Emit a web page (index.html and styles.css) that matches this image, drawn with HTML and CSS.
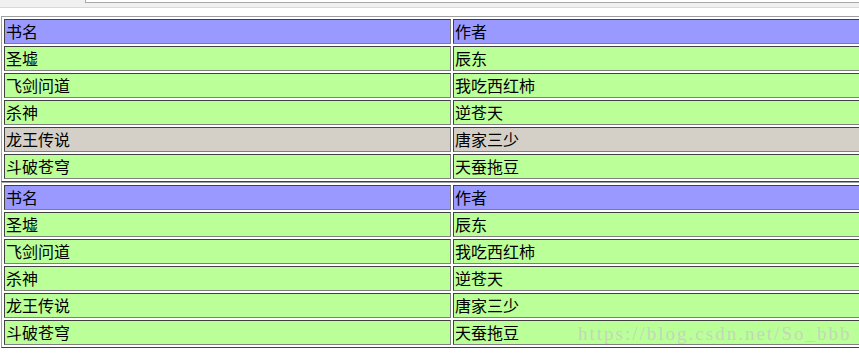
FILE: index.html
```html
<!DOCTYPE html>
<html lang="zh">
<head>
<meta charset="utf-8">
<title>书籍</title>
<link rel="stylesheet" href="styles.css">
</head>
<body>
<div class="chrome"><div class="chrome-box"></div></div>
<main class="page">
<div class="clip">
<table class="books">
  <tr class="head"><td>书名</td><td>作者</td></tr>
  <tr class="row"><td>圣墟</td><td>辰东</td></tr>
  <tr class="row"><td>飞剑问道</td><td>我吃西红柿</td></tr>
  <tr class="row"><td>杀神</td><td>逆苍天</td></tr>
  <tr class="row sel"><td>龙王传说</td><td>唐家三少</td></tr>
  <tr class="row"><td>斗破苍穹</td><td>天蚕拖豆</td></tr>
</table>
<table class="books">
  <tr class="head"><td>书名</td><td>作者</td></tr>
  <tr class="row"><td>圣墟</td><td>辰东</td></tr>
  <tr class="row"><td>飞剑问道</td><td>我吃西红柿</td></tr>
  <tr class="row"><td>杀神</td><td>逆苍天</td></tr>
  <tr class="row"><td>龙王传说</td><td>唐家三少</td></tr>
  <tr class="row"><td>斗破苍穹</td><td>天蚕拖豆</td></tr>
</table>
</div>
<div class="watermark">https://blog.csdn.net/So_bbb</div>
</main>
</body>
</html>
```
FILE: styles.css
```css
html, body {
  margin: 0;
  padding: 0;
  background: #ffffff;
  overflow: hidden;
  width: 859px;
  height: 359px;
}
body {
  font-family: "Noto Sans CJK SC", "Noto Sans", sans-serif;
  font-size: 16px;
  color: #000;
}
.chrome {
  height: 7px;
  background: #f0f0f0;
  border-bottom: 1px solid #d9d9d9;
}
.chrome-box {
  margin-left: 85px;
  height: 2px;
  background: #ffffff;
  border-left: 1px solid #a8a8a8;
  border-bottom: 1px solid #a8a8a8;
}
.page {
  position: relative;
  padding-top: 8px;
}
.clip {
  width: 858px;
  padding-left: 1px;
  overflow: hidden;
}
.books {
  width: 902px;
  border-collapse: separate;
  border-spacing: 2px;
  border-style: solid;
  border-width: 1px;
  border-color: #a0a0a0 #404040 #404040 #a0a0a0;
  table-layout: fixed;
}
.books td {
  width: 50%;
  height: 21px;
  padding: 1px;
  border-style: solid;
  border-width: 1px;
  border-color: #404040 #808080 #808080 #404040;
  line-height: 21px;
  white-space: nowrap;
  vertical-align: middle;
}
.head td { background: #9999ff; }
.row td { background: #bbff99; }
.sel td { background: #d4d0c8; }
.watermark {
  position: absolute;
  left: 578px;
  top: 315px;
  font-family: "Liberation Serif", serif;
  font-size: 19px;
  color: rgba(200, 200, 200, 0.75);
  letter-spacing: 2px;
  white-space: nowrap;
}
```
